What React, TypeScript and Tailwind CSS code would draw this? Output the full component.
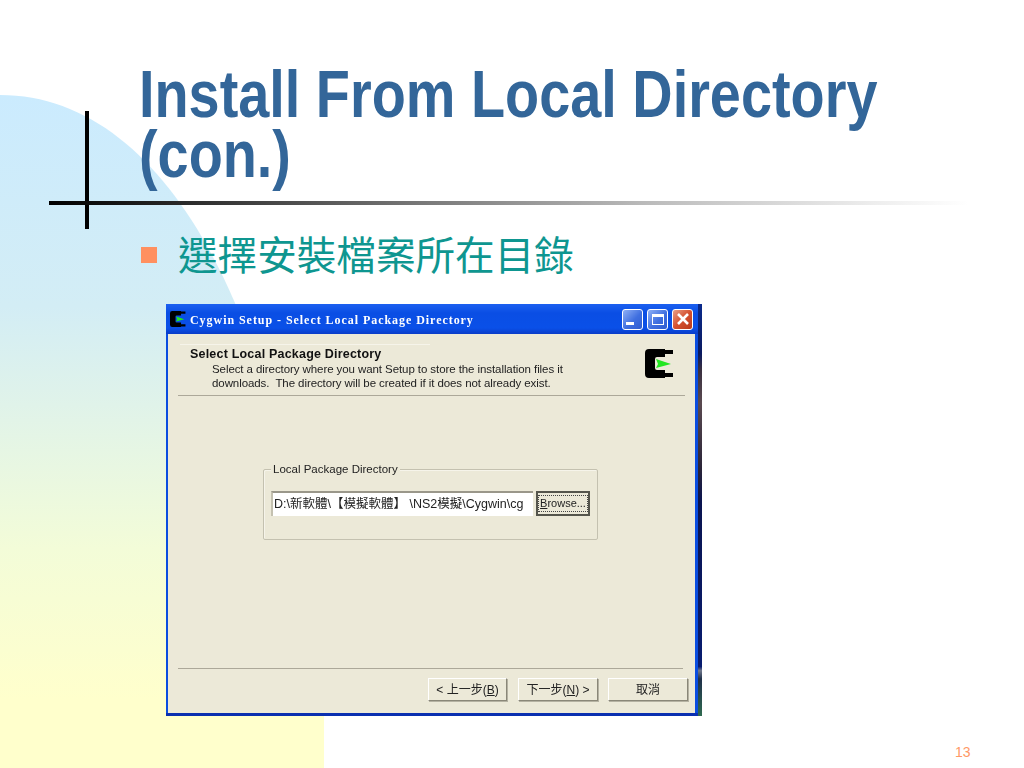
function CygwinMark({ className }: { className: string }) {
  return (
    <svg viewBox="0 0 29 29" className={className}>
      <path d="M4 0 H20 V1 H28 V5 H20 V8 H12 Q10 8 10 10 V19 Q10 21 12 21 H20 V24 H28 V28 H20 V29 H4 Q0 29 0 25 V4 Q0 0 4 0 Z" fill="#000" />
      <path d="M11 10 L26 15 L11 19 L13 15 Z" fill="#22e622" />
    </svg>
  );
}

function CaptionButton({ kind }: { kind: 'min' | 'max' | 'close' }) {
  if (kind === 'close') {
    return (
      <div className="w-[21px] h-[21px] rounded-[3px] border border-white bg-[linear-gradient(135deg,#e8a088,#d5502f_50%,#b83a1c)] flex items-center justify-center">
        <svg viewBox="0 0 14 14" className="w-[14px] h-[14px]">
          <path d="M2 2 L12 12 M12 2 L2 12" stroke="#fff" strokeWidth="2.6" />
        </svg>
      </div>
    );
  }
  return (
    <div className="w-[21px] h-[21px] rounded-[3px] border border-white bg-[linear-gradient(135deg,#8fb0f5,#3f6fe0_55%,#2f5cd0)] flex items-center justify-center">
      {kind === 'min' ? (
        <div className="w-[8px] h-[3px] bg-white mt-[9px] mr-[5px]" />
      ) : (
        <div className="w-[12px] h-[11px] border border-white border-t-[3px]" />
      )}
    </div>
  );
}

function WizardButton({ children, className }: { children: React.ReactNode; className: string }) {
  return (
    <button className={`h-[23px] bg-[#ece9d8] border border-t-white border-l-white border-r-[#8a8778] border-b-[#8a8778] shadow-[1px_1px_0_#b5b2a2] text-[12px] leading-none text-[#222] flex items-center justify-center ${className}`}>
      {children}
    </button>
  );
}

export default function App() {
  return (
    <div className="relative w-[1024px] h-[768px] overflow-hidden bg-white font-['Liberation_Sans',sans-serif]">
      {/* slide background shape */}
      <svg viewBox="0 0 1024 768" className="absolute inset-0 w-[1024px] h-[768px]">
        <defs>
          <linearGradient id="slideBg" x1="0" y1="95" x2="0" y2="700" gradientUnits="userSpaceOnUse">
            <stop offset="0" stopColor="#cbebfe" />
            <stop offset="0.35" stopColor="#d3edf5" />
            <stop offset="0.75" stopColor="#f3fcd8" />
            <stop offset="1" stopColor="#ffffcc" />
          </linearGradient>
        </defs>
        <path d="M0 95 C100 95 180 175 235 303 L324 540 V768 H0 Z" fill="url(#slideBg)" />
      </svg>

      {/* crosshair vertical stroke */}
      <div className="absolute left-[85px] top-[111px] w-[4px] h-[118px] bg-black" />

      <div className="relative flex flex-col">
        <h1 className="ml-[139px] mt-[64px] origin-left scale-x-[0.846] whitespace-nowrap text-[66px] leading-[60px] font-bold text-[#336699]">
          Install From Local Directory
          <br />
          (con.)
        </h1>

        <div className="ml-[49px] mt-[17px] w-[920px] h-[4px] bg-[linear-gradient(90deg,#000_0%,#222_12%,#777_40%,#bbb_65%,#eee_90%,#fff_100%)]" />

        <div className="ml-[141px] mt-[22px] flex items-center h-[52px]">
          <div className="w-[16px] h-[16px] mt-[4px] bg-[#ff9060]" />
          <span className="ml-[21px] text-[39.6px] leading-[52px] font-normal text-[#0e9690] font-['Noto_Sans_CJK_TC',sans-serif]">
            選擇安裝檔案所在目錄
          </span>
        </div>

        {/* cygwin setup window */}
        <div className="ml-[166px] mt-[25px] w-[536px] h-[412px] flex blur-[0.35px]">
          <div className="w-[532px] flex flex-col rounded-t-[4px] bg-[#0a4de0] border-b-[3px] border-b-[#0a2fb0]">
            <div className="h-[30px] shrink-0 flex items-center pl-[4px] pr-[5px] bg-[linear-gradient(180deg,#1c60f0,#0a4ee4_30%,#0a50e8_80%,#0a3cc8)]">
              <CygwinMark className="w-[16px] h-[16px]" />
              <span className="ml-[4px] mt-[2px] text-[12px] font-bold tracking-[0.95px] text-white font-['Liberation_Serif',serif]">
                Cygwin Setup - Select Local Package Directory
              </span>
              <div className="ml-auto flex gap-[4px]">
                <CaptionButton kind="min" />
                <CaptionButton kind="max" />
                <CaptionButton kind="close" />
              </div>
            </div>

            <div className="flex-1 ml-[2px] mr-[3px] bg-[#ece9d8] flex flex-col text-[#222]">
              <div className="relative h-[61px] shrink-0 pl-[22px] pt-[12px]">
                <div className="absolute left-[12px] top-[10px] w-[250px] h-px bg-[#f6f4ea]" />
                <div className="mt-[1px] text-[12.5px] leading-[14px] tracking-[0.2px] font-bold text-[#111]">Select Local Package Directory</div>
                <div className="ml-[22px] mt-[1px] text-[11.5px] leading-[14px] tracking-[-0.08px]">
                  Select a directory where you want Setup to store the installation files it
                  <br />
                  downloads.&nbsp; The directory will be created if it does not already exist.
                </div>
                <CygwinMark className="absolute left-[477px] top-[15px] w-[29px] h-[29px]" />
              </div>
              <div className="mx-[10px] h-px shrink-0 bg-[#aca899]" />

              <div className="relative ml-[95px] mt-[73px] w-[335px] h-[71px] shrink-0 border border-[#c4c1b0] rounded-[2px] shadow-[inset_1px_1px_0_#f6f4ea]">
                <span className="absolute left-[7px] top-[-7px] px-[2px] bg-[#ece9d8] text-[11.5px] leading-[13px]">
                  Local Package Directory
                </span>
                <div className="flex ml-[7px] mt-[21px] gap-[3px]">
                  <div className="w-[262px] h-[25px] bg-white border-t-2 border-l-2 border-t-[#9a978a] border-l-[#c4c1b0] flex items-center pl-[1px] text-[12.5px] whitespace-pre overflow-hidden font-['Liberation_Sans','Noto_Sans_CJK_TC',sans-serif]">
                    D:\新軟體\【模擬軟體】 \NS2模擬\Cygwin\cg
                  </div>
                  <button className="w-[54px] h-[25px] bg-[#ece9d8] border-2 border-[#55554c] flex items-center justify-center text-[11px]">
                    <span className="px-[1px] border border-dotted border-[#444] leading-[15px]"><span className="underline">B</span>rowse...</span>
                  </button>
                </div>
              </div>

              <div className="ml-[10px] mr-[12px] mt-[128px] h-px shrink-0 bg-[#aca899]" />
              <div className="flex ml-[260px] mt-[9px] font-['Liberation_Sans','Noto_Sans_CJK_TC',sans-serif]">
                <WizardButton className="w-[79px]">&lt; 上一步(<span className="underline">B</span>)</WizardButton>
                <WizardButton className="w-[80px] ml-[11px]">下一步(<span className="underline">N</span>) &gt;</WizardButton>
                <WizardButton className="w-[80px] ml-[10px]">取消</WizardButton>
              </div>
            </div>
          </div>
          <div className="w-[4px] bg-[linear-gradient(180deg,#0a2a8c_0%,#0a1a60_12%,#3a3040_16%,#5a4a50_24%,#2a2438_40%,#0a1450_48%,#081c70_88%,#70788c_89%,#20304a_91%,#2f6a50_100%)]" />
        </div>

        <span className="absolute left-[955px] top-[745px] text-[14px] leading-[14px] text-[#ff9966]">13</span>
      </div>
    </div>
  );
}
